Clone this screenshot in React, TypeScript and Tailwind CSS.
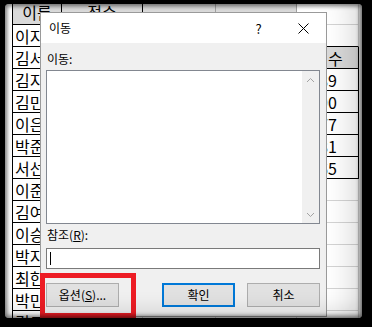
import React from "react";

const names = [
  "이지은",
  "김서연",
  "김지훈",
  "김민준",
  "이은서",
  "박준호",
  "서선영",
  "이준혁",
  "김여진",
  "이승민",
  "박지원",
  "최한결",
  "박민수",
  "김도윤",
];

const scores = ["89", "90", "77", "81", "65"];

function Sheet() {
  const rows = Array.from({ length: 15 }, (_, i) => i);
  return (
    <div className="pl-[7px] flex flex-col text-[16px] leading-[20px] text-black">
      {rows.map((i) => {
        const header = i === 0;
        let eCell: React.ReactNode;
        if (i === 0) {
          eCell = <div className="w-[62px] shrink-0 bg-white border-b border-r border-[#d4d4d4]" />;
        } else if (i === 1) {
          eCell = <div className="w-[62px] shrink-0 bg-white border-b border-b-black border-r border-r-[#d4d4d4]" />;
        } else if (i === 2) {
          eCell = (
            <div className="w-[62px] shrink-0 bg-[#d9d9d9] border-b border-r border-l border-black flex items-center justify-center">
              점수
            </div>
          );
        } else if (i >= 3 && i <= 7) {
          eCell = (
            <div className="w-[62px] shrink-0 bg-white border-b border-r border-l border-black flex items-center justify-center">
              {scores[i - 3]}
            </div>
          );
        } else {
          eCell = <div className="w-[62px] shrink-0 bg-white border-b border-r border-[#d4d4d4]" />;
        }
        return (
          <div key={i} className={header ? "flex h-[21px] shrink-0" : "flex h-[22px] shrink-0"}>
            {header ? (
              <div className="w-[50px] shrink-0 bg-[#d9d9d9] border-l border-r border-b border-black flex items-center justify-center pb-[4px]">
                이름
              </div>
            ) : (
              <div className="w-[50px] shrink-0 bg-white border-l border-r border-b border-black flex items-center pl-[2px] overflow-hidden whitespace-nowrap">
                {names[i - 1]}
              </div>
            )}
            {header ? (
              <div className="w-[81px] shrink-0 bg-[#d9d9d9] border-r border-b border-black flex items-center justify-center pb-[4px]">
                점수
              </div>
            ) : (
              <div className="w-[81px] shrink-0 bg-white border-r border-b border-[#d4d4d4]" />
            )}
            <div
              className={
                header
                  ? "w-[73px] shrink-0 bg-[#d9d9d9] border-r border-b border-[#a0a0a0]"
                  : "w-[73px] shrink-0 bg-white border-r border-b border-[#d4d4d4]"
              }
            />
            <div
              className={
                header
                  ? "w-[81px] shrink-0 bg-[#d9d9d9] border-r border-b border-[#a0a0a0]"
                  : "w-[81px] shrink-0 bg-white border-r border-b border-[#d4d4d4]"
              }
            />
            {eCell}
          </div>
        );
      })}
    </div>
  );
}

function Dialog() {
  return (
    <div className="absolute left-[40px] top-[12px] w-[287px] h-[305px] border border-[#9a9a9a] bg-[#f0f0f0] flex flex-col text-[12px] text-black">
      <div className="h-[30px] shrink-0 bg-white flex items-center">
        <span className="pl-[8px] flex-1 leading-[16px]">이동</span>
        <div className="w-[45px] h-full flex items-center justify-center text-[13px] leading-[16px] pt-[1px]">?</div>
        <div className="w-[45px] h-full flex items-center justify-center">
          <svg width="11" height="11" viewBox="0 0 11 11">
            <path d="M0.5 0.5 L10.5 10.5 M10.5 0.5 L0.5 10.5" stroke="#000" strokeWidth="1" fill="none" />
          </svg>
        </div>
      </div>
      <div className="flex flex-col pl-[5px] pr-[6px] pt-[8px]">
        <div className="leading-[16px] pl-[1px]">이동:</div>
        <div className="mt-[3px] h-[154px] border border-[#828790] bg-white flex justify-end">
          <div className="w-[17px] h-full bg-[#f0f0f0] flex flex-col justify-between">
            <div className="h-[17px] flex items-center justify-center">
              <svg width="9" height="6" viewBox="0 0 9 6">
                <polyline points="1,5 4.5,1.5 8,5" stroke="#a3a3a3" strokeWidth="1" fill="none" />
              </svg>
            </div>
            <div className="h-[17px] flex items-center justify-center">
              <svg width="9" height="6" viewBox="0 0 9 6">
                <polyline points="1,1 4.5,4.5 8,1" stroke="#a3a3a3" strokeWidth="1" fill="none" />
              </svg>
            </div>
          </div>
        </div>
        <div className="mt-[3px] leading-[16px] pl-[1px]">
          참조(<span className="underline">R</span>):
        </div>
        <div className="mt-[5px] h-[21px] border border-[#7a7a7a] bg-white flex items-center pl-[3px]">
          <div className="w-px h-[13px] bg-black" />
        </div>
        <div className="mt-[14px] flex">
          <button className="w-[73px] h-[24px] border border-[#adadad] bg-[#e1e1e1] text-[12px] leading-[16px]">
            옵션(<span className="underline">S</span>)...
          </button>
          <button className="ml-auto w-[73px] h-[24px] border-2 border-[#0078d7] bg-[#e1e1e1] text-[12px] leading-[16px]">
            확인
          </button>
          <button className="ml-[12px] w-[73px] h-[24px] border border-[#adadad] bg-[#e1e1e1] text-[12px] leading-[16px]">
            취소
          </button>
        </div>
      </div>
    </div>
  );
}

export default function App() {
  return (
    <div className="relative w-[372px] h-[327px] overflow-hidden bg-black pt-[4px] pl-[5px] font-['Noto_Sans_CJK_KR','Noto_Sans',sans-serif]">
      <div className="w-[357px] h-[314px] overflow-hidden bg-white rounded-[4px]">
        <Sheet />
      </div>
      <Dialog />
      <div className="absolute left-[40px] top-[273px] w-[96px] h-[45px] border-[5px] border-[#ed1c24]" />
      <div className="absolute left-[5px] top-[4px] w-[357px] h-[314px] rounded-[4px] pointer-events-none shadow-[inset_0_0_4px_2px_rgba(0,0,0,0.55),inset_-34px_0_30px_-24px_rgba(0,0,0,0.16),inset_0_-24px_22px_-18px_rgba(0,0,0,0.14)]" />
    </div>
  );
}
